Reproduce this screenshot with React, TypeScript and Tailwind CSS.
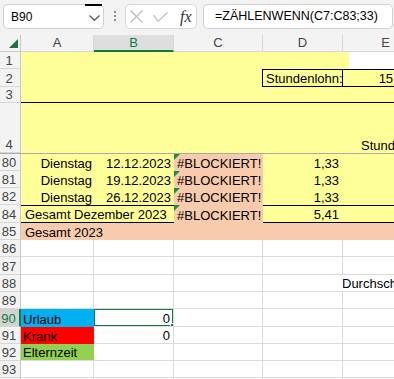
import React from "react";

const YEL = "bg-[#ffff99]";
const PEACH = "bg-[#f8cbad]";
const GRID = "border-[#dadada]";

function RowHead({ n, h, sel = false }: { n: string; h: string; sel?: boolean }) {
  return (
    <div
      className={`w-[21px] ${h} shrink-0 flex items-end justify-center pr-[2px] leading-[15px] text-[13px] border-b border-b-[#d6d6d6] ${
        sel
          ? "bg-[#d2d2d2] text-[#107c41] border-r-2 border-r-[#107c41]"
          : "bg-[#f3f3f3] text-[#444] border-r border-r-[#c8c8c8]"
      }`}
    >
      {n}
    </div>
  );
}

function Cell({ w, cls = "", children }: { w: string; cls?: string; children?: React.ReactNode }) {
  return (
    <div className={`${w} h-full shrink-0 flex items-end overflow-hidden whitespace-nowrap leading-[15px] ${cls}`}>
      {children}
    </div>
  );
}

function ErrTri() {
  return (
    <span className="absolute left-0 top-0 w-0 h-0 border-t-[6px] border-t-[#1e8c45] border-r-[6px] border-r-transparent" />
  );
}

function DayRow({ n, date, val }: { n: string; date: string; val: string }) {
  return (
    <div className="flex h-[17px]">
      <RowHead n={n} h="h-[17px]" />
      <Cell w="w-[73px]" cls={`${YEL} justify-end pr-[2px]`}>Dienstag</Cell>
      <Cell w="w-[80px]" cls={`${YEL} justify-end pr-[3px]`}>{date}</Cell>
      <Cell w="w-[89px]" cls={`${PEACH} relative pl-[3px]`}>
        <ErrTri />
        #BLOCKIERT!
      </Cell>
      <Cell w="w-[80px]" cls={`${YEL} justify-end pr-[4px]`}>{val}</Cell>
      <Cell w="w-[86px]" cls={YEL} />
    </div>
  );
}

function WhiteRow({
  n,
  h,
  a,
  aCls,
  b,
  sel = false,
  durch = false,
}: {
  n: string;
  h: string;
  a?: string;
  aCls?: string;
  b?: string;
  sel?: boolean;
  durch?: boolean;
}) {
  return (
    <div className={`flex ${h}`}>
      <RowHead n={n} h={h} sel={sel} />
      <Cell w="w-[73px]" cls={aCls ? `${aCls} pl-[2px]` : `border-r border-b ${GRID}`}>{a}</Cell>
      <Cell w="w-[80px]" cls={`relative justify-end pr-[3px] border-r border-b ${GRID}`}>
        {b}
        {sel && (
          <>
            <span className="absolute -left-[1px] -top-[1px] -right-[1px] -bottom-[1px] border-2 border-[#107c41]" />
            <span className="absolute -right-[3px] -bottom-[3px] w-[6px] h-[6px] bg-[#107c41] border border-white" />
          </>
        )}
      </Cell>
      <Cell w="w-[89px]" cls={`border-r border-b ${GRID}`} />
      <Cell w="w-[80px]" cls={durch ? `border-b ${GRID}` : `border-r border-b ${GRID}`} />
      <Cell w="w-[86px]" cls={`border-r border-b ${GRID}`}>
        {durch ? <span className="-ml-[1px]">Durchschnittlicher</span> : null}
      </Cell>
    </div>
  );
}

export default function App() {
  return (
    <div className="w-[394px] h-[379px] overflow-hidden bg-white text-black text-[13px] [font-family:'Liberation_Sans',Arial,sans-serif]">
      {/* formula bar */}
      <div className="h-[35px] bg-[#f3f3f3] flex items-start pt-[4px]">
        <div className="relative ml-[3px] w-[101px] h-[25px] shrink-0 bg-white border border-[#d0d0d0] rounded-[5px] flex items-center pl-[7px] text-[12px]">
          B90
          <span className="absolute left-[81px] -top-[1px] w-[17px] h-[2px] bg-black" />
          <svg className="absolute left-[85px] top-[10px]" width="11" height="6" viewBox="0 0 11 6" fill="none" stroke="#555" strokeWidth="1.2">
            <path d="M0.5 0.5 5.5 5.3 10.5 0.5" />
          </svg>
        </div>
        <div className="ml-[10px] pt-[7px] flex flex-col gap-[2px] shrink-0">
          <span className="w-[2px] h-[2px] bg-[#8a8a8a]" />
          <span className="w-[2px] h-[2px] bg-[#8a8a8a]" />
          <span className="w-[2px] h-[2px] bg-[#8a8a8a]" />
        </div>
        <div className="ml-[9px] w-[72px] h-[25px] shrink-0 bg-white border border-[#d8d8d8] rounded-[5px] flex items-center pl-[4px]">
          <svg width="13" height="13" viewBox="0 0 13 13" fill="none" stroke="#b8b8b8" strokeWidth="1.1">
            <path d="M0.5 0.5 12.5 12.5 M12.5 0.5 0.5 12.5" />
          </svg>
          <svg className="ml-[10px] mt-[1px]" width="15" height="10" viewBox="0 0 15 10" fill="none" stroke="#b8b8b8" strokeWidth="1.1">
            <path d="M0.5 3 5 9.3 14.5 0.5" />
          </svg>
          <span className="ml-[12px] italic text-[16px] leading-none text-[#333] [font-family:'Liberation_Serif',serif]">
            fx
          </span>
        </div>
        <div className="ml-[6px] mr-[1px] flex-1 h-[25px] bg-white border border-[#d0d0d0] rounded-[5px] flex items-center pl-[11px] text-[12.5px]">
          =ZÄHLENWENN(C7:C83;33)
        </div>
      </div>

      {/* column headers */}
      <div className="flex h-[17px] text-[13px] text-[#444] bg-[#f3f3f3]">
        <div className="relative w-[21px] shrink-0 border-r border-b border-[#c8c8c8]">
          <span className="absolute right-[2px] bottom-[3px] w-0 h-0 border-b-[9px] border-b-[#1f7244] border-l-[9px] border-l-transparent" />
        </div>
        <div className="w-[73px] shrink-0 flex items-center justify-center border-r border-b border-[#d6d6d6]">A</div>
        <div className="w-[80px] shrink-0 flex items-center justify-center bg-[#dedede] text-[#107c41] border-r border-[#d6d6d6] border-b-2 border-b-[#107c41]">B</div>
        <div className="w-[89px] shrink-0 flex items-center justify-center border-r border-b border-[#d6d6d6]">C</div>
        <div className="w-[80px] shrink-0 flex items-center justify-center border-r border-b border-[#d6d6d6]">D</div>
        <div className="w-[86px] shrink-0 flex items-center justify-center border-r border-b border-[#d6d6d6]">E</div>
      </div>

      {/* frozen rows 1-4 */}
      <div className="flex h-[17px]">
        <RowHead n="1" h="h-[17px]" />
        <Cell w="w-[328px]" cls={YEL} />
      </div>
      <div className="flex h-[18px]">
        <RowHead n="2" h="h-[18px]" />
        <Cell w="w-[241px]" cls={YEL} />
        <Cell w="w-[81px]" cls={`${YEL} border border-black pl-[3px]`}>Stundenlohn:</Cell>
        <Cell w="w-[86px]" cls={`${YEL} border-t border-b border-r border-black justify-end pr-[6px]`}>15,00 €</Cell>
      </div>
      <div className="flex h-[16px]">
        <RowHead n="3" h="h-[16px]" />
        <Cell w="w-[408px]" cls={`${YEL} border-b border-black`} />
      </div>
      <div className="flex h-[50px]">
        <RowHead n="4" h="h-[50px]" />
        <Cell w="w-[322px]" cls={YEL} />
        <Cell w="w-[86px]" cls={`${YEL} pl-[18px]`}>Stunden</Cell>
      </div>
      <div className="h-[1px] bg-[#a9a9a9]" />

      {/* December rows */}
      <DayRow n="80" date="12.12.2023" val="1,33" />
      <DayRow n="81" date="19.12.2023" val="1,33" />
      <DayRow n="82" date="26.12.2023" val="1,33" />
      <div className="flex h-[18px]">
        <RowHead n="84" h="h-[18px]" />
        <Cell w="w-[153px]" cls={`${YEL} border-t border-b border-black pl-[4px]`}>Gesamt Dezember 2023</Cell>
        <Cell w="w-[89px]" cls={`${PEACH} relative pl-[3px]`}>
          <ErrTri />
          #BLOCKIERT!
        </Cell>
        <Cell w="w-[80px]" cls={`${YEL} border-t border-b border-black justify-end pr-[4px]`}>5,41</Cell>
        <Cell w="w-[86px]" cls={`${YEL} border-t border-b border-black`} />
      </div>
      <div className="flex h-[17px]">
        <RowHead n="85" h="h-[17px]" />
        <Cell w="w-[408px]" cls={`${PEACH} pl-[4px]`}>Gesamt 2023</Cell>
      </div>

      {/* white area */}
      <WhiteRow n="86" h="h-[17px]" />
      <WhiteRow n="87" h="h-[18px]" />
      <WhiteRow n="88" h="h-[17px]" durch />
      <WhiteRow n="89" h="h-[17px]" />
      <WhiteRow n="90" h="h-[18px]" a="Urlaub" aCls="bg-[#00b0f0]" b="0" sel />
      <WhiteRow n="91" h="h-[17px]" a="Krank" aCls="bg-[#ff0000]" b="0" />
      <WhiteRow n="92" h="h-[17px]" a="Elternzeit" aCls="bg-[#92d050] border-b border-[#dadada]" />
      <WhiteRow n="93" h="h-[17px]" />
      <WhiteRow n="94" h="h-[17px]" />
    </div>
  );
}
